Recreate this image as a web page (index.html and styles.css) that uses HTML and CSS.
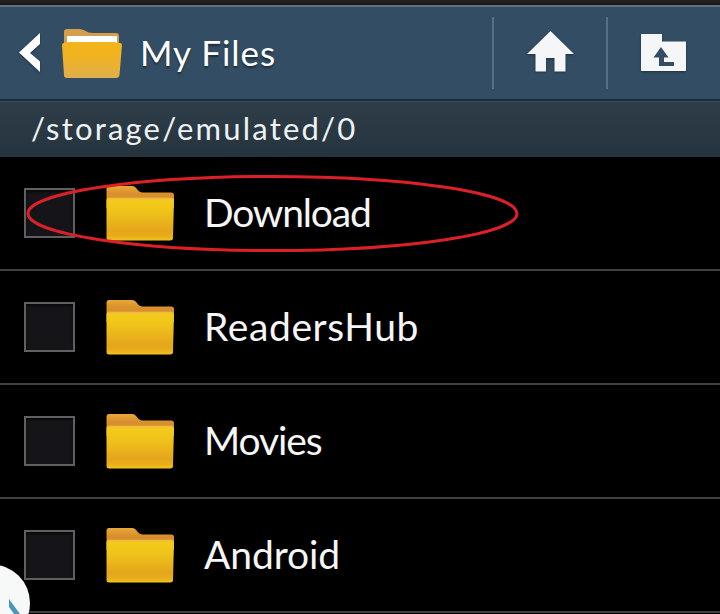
FILE: index.html
```html
<!DOCTYPE html>
<html lang="en">
<head>
<meta charset="utf-8">
<title>My Files</title>
<link rel="stylesheet" href="styles.css">
</head>
<body>
<svg class="defs" width="0" height="0" aria-hidden="true">
  <defs>
    <linearGradient id="front" x1="0" y1="0" x2="0" y2="1"><stop offset="0" stop-color="#f3cc1b"/><stop offset=".3" stop-color="#f0c419"/><stop offset=".78" stop-color="#e4a51c"/><stop offset=".9" stop-color="#e9ad1b"/><stop offset="1" stop-color="#f1c51a"/></linearGradient>
    <linearGradient id="back" x1="0" y1="0" x2="0" y2="1"><stop offset="0" stop-color="#e9a838"/><stop offset=".35" stop-color="#d9902c"/></linearGradient>
    <symbol id="folder" viewBox="0 0 68 55">
      <path fill="url(#back)" d="M.5 3Q.5 0 3 0H26C31 0 31 6.500 37 6.500H65Q68 6.500 68 9V22H.5Z"/>
      <path fill="url(#front)" d="M.5 14Q.5 12 3 12H65Q68 12 68 14L67 52Q67 54.500 64 54.500H3Q.5 54.500 .5 52Z"/>
      <path fill="none" stroke="#f0b94a" stroke-width="1.5" d="M2 12.500H66"/>
    </symbol>
  </defs>
</svg>
<div class="screen">
  <div class="status"></div>
  <header class="bar">
    <svg class="back" width="22" height="40" viewBox="0 0 22 40"><path fill="#fff" d="M21 0V11L11 20L21 28.500V39L0 19.500Z"/></svg>
    <svg class="app" width="60" height="50" viewBox="0 0 60 50">
      <defs><linearGradient id="app" x1="0" y1="0" x2="0" y2="1"><stop offset="0" stop-color="#f3b51b"/><stop offset=".4" stop-color="#f1b320"/><stop offset="1" stop-color="#dfae4c"/></linearGradient></defs>
      <path fill="#d69d4f" d="M2 3Q2 0 5 0H17C23 0 24 4 31 4H54Q57 4 57 7V22H2Z"/>
      <path fill="#fff" d="M5 7H55V20H5Z"/>
      <path fill="url(#app)" d="M0 16Q0 14 2 14H4L6 13H53L55 14H58Q60 14 60 16L57.5 46Q57 49 54 49H5Q2 49 2 46Z"/>
    </svg>
    <h1 class="title">My Files</h1>
    <div class="action home"><svg width="48" height="42" viewBox="0 0 48 42"><path fill="#f5f6f7" d="M23.5 0L47 23H38.5V40.5H27.5V27H19V40.5H8.500V23H0Z"/></svg></div>
    <div class="action up"><svg width="46" height="38" viewBox="0 0 46 38"><path fill="#f5f6f7" d="M0 0H21V7.500H45V37H0Z"/><path fill="#334e64" d="M20 13L27.500 23.500H23V28H33V32H18V23.500H12.500Z"/></svg></div>
  </header>
  <div class="path"><span>/storage/emulated/0</span></div>
  <main>
    <div class="row"><i class="check"></i><svg class="folder"><use href="#folder"/></svg><span class="name download">Download</span>
      <svg class="ring" width="494" height="80" viewBox="0 0 494 80"><ellipse cx="246.500" cy="39.500" rx="244.500" ry="37" fill="none" stroke="#db2127" stroke-width="3"/></svg></div>
    <div class="row"><i class="check"></i><svg class="folder"><use href="#folder"/></svg><span class="name readers">ReadersHub</span></div>
    <div class="row"><i class="check"></i><svg class="folder"><use href="#folder"/></svg><span class="name movies">Movies</span></div>
    <div class="row"><i class="check"></i><svg class="folder"><use href="#folder"/></svg><span class="name android">Android</span></div>
  </main>
  <svg class="bubble" width="32" height="52" viewBox="0 0 32 52"><circle cx="-8.500" cy="41" r="38.500" fill="#f7f8f8"/><path fill="#4e94b8" d="M9 37L20 52H14L9 45Z"/></svg>
</div>
</body>
</html>
```

FILE: styles.css
```css
* { box-sizing: border-box; }
body { margin: 0; background: #000; font-family: Lato, "Open Sans", sans-serif; color: #f6f6f6; }
.defs { position: absolute; }
.screen { position: relative; width: 720px; height: 614px; overflow: hidden; }
.status { height: 5px; background: linear-gradient(#251f1b 0 3px, #181a1c 3px); }
.bar {
  display: flex; align-items: center; height: 96px; padding-left: 19px;
  background: #334e64; border-top: 2px solid #5b7080; border-bottom: 2px solid #192c3b;
}
.back { flex: none; filter: drop-shadow(0 1px 1px #1c303f); }
.app { flex: none; margin: 2px 0 0 21px; }
.title {
  flex: 1; margin: 0 0 3px 18px; font-size: 35px; font-weight: 400; line-height: 44px;
  letter-spacing: 1px; color: #fff; text-shadow: 0 2px 2px #1b2c39; white-space: nowrap;
}
.action { display: flex; align-items: center; flex: none; height: 72px; border-left: 2px solid #577084; }
.action svg { filter: drop-shadow(0 1px 1px #1c303f); }
.home { width: 114px; padding-left: 33px; }
.home svg { margin-bottom: 2px; }
.up { width: 114px; padding-left: 33px; }
.path {
  display: flex; align-items: center; height: 56px; padding: 0 0 4px 31px;
  background: linear-gradient(#2e3d48, #25343d); border-top: 1px solid #3a4d5b;
  font-size: 31px; letter-spacing: 2.2px; color: #edf2f4; white-space: nowrap;
}
.row { position: relative; display: flex; align-items: center; height: 114px; padding-left: 24px; border-bottom: 2px solid #414141; }
.check { width: 51px; height: 50px; flex: none; background: #151519; border: 2px solid #606060; box-shadow: inset 0 2px 2px #09090b; }
.folder { width: 68px; height: 55px; margin-left: 31px; flex: none; }
.name { margin: 0 0 2px 30px; font-size: 39px; line-height: 48px; white-space: nowrap; }
.download { letter-spacing: -1.2px; }
.readers { letter-spacing: .6px; }
.movies { letter-spacing: -1.1px; }
.android { letter-spacing: -.1px; }
.ring { position: absolute; left: 26px; top: 17px; }
.bubble { position: absolute; left: 0; bottom: 0; }
```
